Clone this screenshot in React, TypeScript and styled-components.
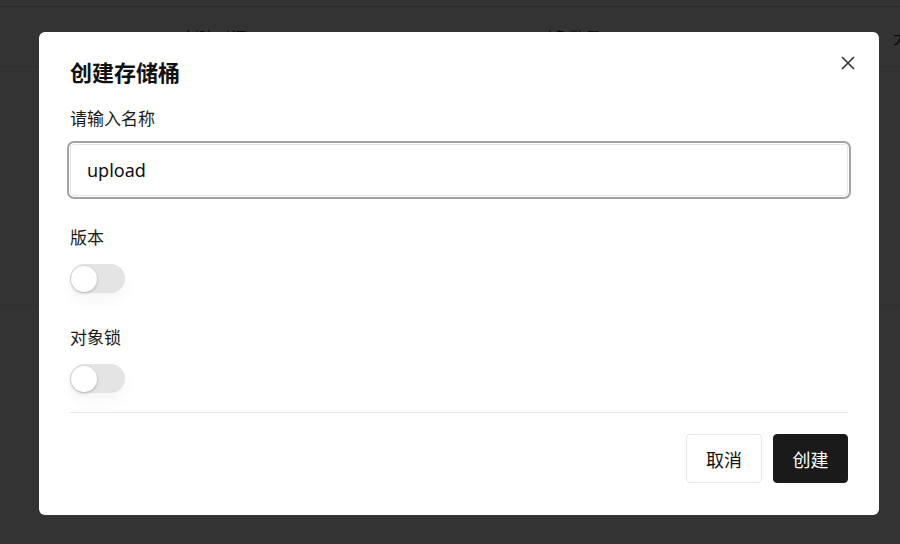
import { useState } from 'react';
import styled, { createGlobalStyle } from 'styled-components';

const GlobalStyle = createGlobalStyle`
  html, body {
    margin: 0;
    padding: 0;
    background: #fff;
    font-family: 'Noto Sans CJK SC', 'Noto Sans', sans-serif;
    color: #111;
  }
  * { box-sizing: border-box; }
`;

const Page = styled.div`
  width: 900px;
  height: 544px;
  position: relative;
  overflow: hidden;
  background: #fff;
`;

const TopBar = styled.div`
  height: 7px;
  border-bottom: 1px solid #d8d8d8;
`;

const TableHead = styled.div`
  display: grid;
  grid-template-columns: 183px 354px 356px 1fr;
  height: 60px;
  border-bottom: 1px solid #e8e8e8;
  align-items: center;
  font-size: 16px;
  color: #333;
  white-space: nowrap;
  overflow: hidden;
  span:first-child { visibility: hidden; }
`;

const TableBody = styled.div`
  height: 239px;
  border-bottom: 1px solid #e8e8e8;
`;

const Backdrop = styled.div`
  position: absolute;
  inset: 0;
  background: rgba(0, 0, 0, 0.8);
  padding: 32px 0 0 39px;
`;

const Dialog = styled.div`
  width: 840px;
  height: 483px;
  background: #fff;
  border-radius: 6px;
  padding: 25px 31px 0;
  position: relative;
  display: flex;
  flex-direction: column;
`;

const Title = styled.h2`
  margin: 0;
  font-size: 22px;
  font-weight: 700;
  line-height: 28px;
  color: #111;
`;

const Close = styled.button`
  position: absolute;
  top: 21px;
  right: 21px;
  width: 20px;
  height: 20px;
  padding: 0;
  border: none;
  background: none;
  display: flex;
  align-items: center;
  justify-content: center;
  cursor: pointer;
`;

const Label = styled.div<{ $top: number }>`
  margin-top: ${(p) => p.$top}px;
  font-size: 17px;
  line-height: 24px;
  color: #1a1a1a;
`;

const Input = styled.input`
  margin-top: 14px;
  width: 100%;
  height: 52px;
  border: 1px solid #e6e6e6;
  border-radius: 4px;
  outline: 2px solid #a3a3a3;
  outline-offset: 1px;
  padding: 0 16px;
  font-family: 'Noto Sans', 'Noto Sans CJK SC', sans-serif;
  font-size: 18px;
  color: #111;
  background: #fff;
`;

const Track = styled.button<{ $on: boolean }>`
  margin-top: 15px;
  width: 55px;
  height: 29px;
  padding: 0;
  border: none;
  border-radius: 15px;
  background: ${(p) => (p.$on ? '#1a1a1a' : '#e4e4e4')};
  position: relative;
  cursor: pointer;
  box-shadow: 0 8px 14px rgba(0, 0, 0, 0.04);
`;

const Knob = styled.span<{ $on: boolean }>`
  position: absolute;
  top: 2px;
  left: ${(p) => (p.$on ? '28px' : '1px')};
  width: 26px;
  height: 26px;
  border-radius: 50%;
  background: #fff;
  box-shadow: 0 1px 3px rgba(0, 0, 0, 0.25);
  transition: left 0.15s;
`;

const Divider = styled.hr`
  margin: 19px 0 0;
  border: none;
  border-top: 1px solid #e9e9e9;
`;

const Footer = styled.div`
  display: flex;
  justify-content: flex-end;
  gap: 11px;
  margin-top: 21px;
`;

const Button = styled.button<{ $primary?: boolean }>`
  height: 49px;
  width: ${(p) => (p.$primary ? '75px' : '76px')};
  padding: 0;
  border-radius: 4px;
  font-family: 'Noto Sans CJK SC', sans-serif;
  font-size: 18px;
  cursor: pointer;
  border: 1px solid ${(p) => (p.$primary ? '#1a1a1a' : '#e8e8e8')};
  background: ${(p) => (p.$primary ? '#1a1a1a' : '#fff')};
  color: ${(p) => (p.$primary ? '#fff' : '#111')};
`;

const Switch = ({ on, onToggle }: { on: boolean; onToggle: () => void }) => (
  <Track $on={on} onClick={onToggle}>
    <Knob $on={on} />
  </Track>
);

const App = () => {
  const [name, setName] = useState('upload');
  const [versioning, setVersioning] = useState(false);
  const [locking, setLocking] = useState(false);

  return (
    <>
      <GlobalStyle />
      <Page>
        <TopBar />
        <TableHead>
          <span>名称</span>
          <span>创建时间</span>
          <span>对象数量</span>
          <span>大小</span>
        </TableHead>
        <TableBody />
        <Backdrop>
          <Dialog>
            <Title>创建存储桶</Title>
            <Close aria-label="关闭">
              <svg width="14" height="14" viewBox="0 0 14 14" fill="none" stroke="#333" strokeWidth="1.6">
                <path d="M1 1L13 13M13 1L1 13" />
              </svg>
            </Close>
            <Label $top={21}>请输入名称</Label>
            <Input value={name} onChange={(e) => setName(e.target.value)} />
            <Label $top={29}>版本</Label>
            <Switch on={versioning} onToggle={() => setVersioning(!versioning)} />
            <Label $top={32}>对象锁</Label>
            <Switch on={locking} onToggle={() => setLocking(!locking)} />
            <Divider />
            <Footer>
              <Button>取消</Button>
              <Button $primary>创建</Button>
            </Footer>
          </Dialog>
        </Backdrop>
      </Page>
    </>
  );
};

export default App;
